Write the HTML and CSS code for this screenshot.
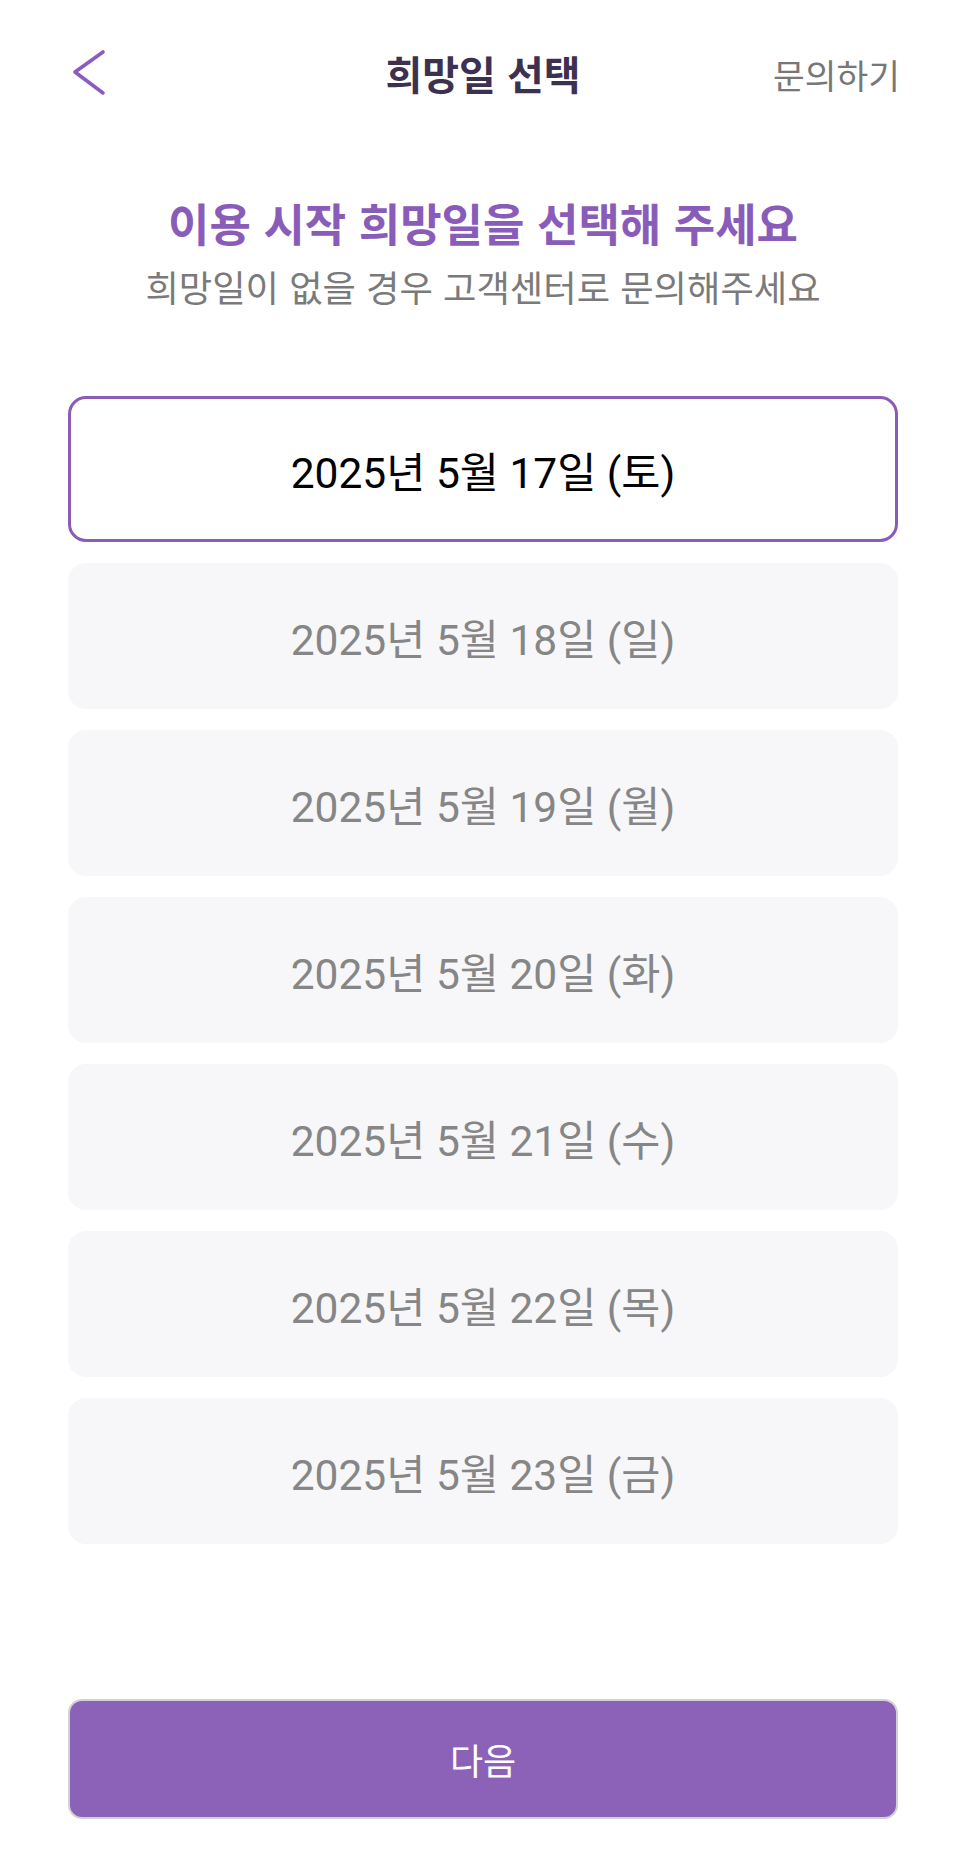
FILE: index.html
```html
<!DOCTYPE html>
<html lang="ko">
<head>
<meta charset="utf-8">
<title>희망일 선택</title>
<link rel="stylesheet" href="styles.css">
</head>
<body>
<div class="page">
  <header class="topbar">
    <button class="back" aria-label="뒤로">
      <svg width="40" height="52" viewBox="0 0 40 52"><path d="M33 4 L5 24 L33 45" fill="none" stroke="#8a5cc0" stroke-width="3.6" stroke-linecap="round" stroke-linejoin="round"/></svg>
    </button>
    <h1 class="title">희망일 선택</h1>
    <a class="inquiry">문의하기</a>
  </header>

  <section class="intro">
    <h2 class="headline">이용 시작 희망일을 선택해 주세요</h2>
    <p class="sub">희망일이 없을 경우 고객센터로 문의해주세요</p>
  </section>

  <ul class="dates">
    <li class="date selected">2025년 5월 17일 (토)</li>
    <li class="date">2025년 5월 18일 (일)</li>
    <li class="date">2025년 5월 19일 (월)</li>
    <li class="date">2025년 5월 20일 (화)</li>
    <li class="date">2025년 5월 21일 (수)</li>
    <li class="date">2025년 5월 22일 (목)</li>
    <li class="date">2025년 5월 23일 (금)</li>
  </ul>

  <footer class="footer">
    <button class="next">다음</button>
  </footer>
</div>
</body>
</html>
```

FILE: styles.css
```css
* { box-sizing: border-box; }
html, body { margin: 0; padding: 0; background: #ffffff; }
body {
  font-family: "Roboto", "Noto Sans CJK KR", sans-serif;
}
.page {
  min-height: 1867px;
  display: flex;
  flex-direction: column;
  padding: 0 68px;
}
.topbar {
  height: 148px;
  display: grid;
  grid-template-columns: 1fr auto 1fr;
  align-items: center;
}
.back {
  justify-self: start;
  background: none;
  border: 0;
  padding: 0;
  margin-left: 2px;
  display: flex;
}
.title {
  margin: 0;
  font-family: "Noto Sans CJK KR", sans-serif;
  font-size: 40px;
  font-weight: 700;
  color: #3d3150;
  line-height: 1;
  padding-bottom: 2px;
}
.inquiry {
  justify-self: end;
  font-family: "Noto Sans CJK KR", sans-serif;
  font-size: 34.5px;
  color: #777777;
  line-height: 1;
  margin-right: -2px;
}
.intro {
  margin-top: 44px;
  text-align: center;
}
.headline {
  margin: 0;
  font-family: "Noto Sans CJK KR", sans-serif;
  font-size: 45px;
  font-weight: 700;
  color: #8a5cba;
  line-height: 62px;
}
.sub {
  margin: 2px 0 0;
  font-family: "Noto Sans CJK KR", sans-serif;
  font-size: 36.3px;
  color: #7a7a7a;
  line-height: 60px;
}
.dates {
  list-style: none;
  margin: 80px 0 0;
  padding: 0;
  display: flex;
  flex-direction: column;
  gap: 21px;
}
.date {
  height: 146px;
  border-radius: 18px;
  background: #f7f7f9;
  border: 3px solid #f7f7f9;
  display: flex;
  align-items: center;
  justify-content: center;
  font-size: 42.5px;
  font-weight: 400;
  color: #868686;
}
.date.selected {
  background: #ffffff;
  border-color: #8a5cb8;
  color: #000000;
}
.footer {
  margin-top: auto;
  padding-bottom: 48px;
}
.next {
  width: 100%;
  height: 120px;
  border: 2px solid #d2d2d2;
  border-radius: 14px;
  background: #8c62b9;
  color: #ffffff;
  font-family: "Noto Sans CJK KR", sans-serif;
  font-size: 36px;
  font-weight: 400;
  display: flex;
  align-items: center;
  justify-content: center;
  padding: 0;
}
```
